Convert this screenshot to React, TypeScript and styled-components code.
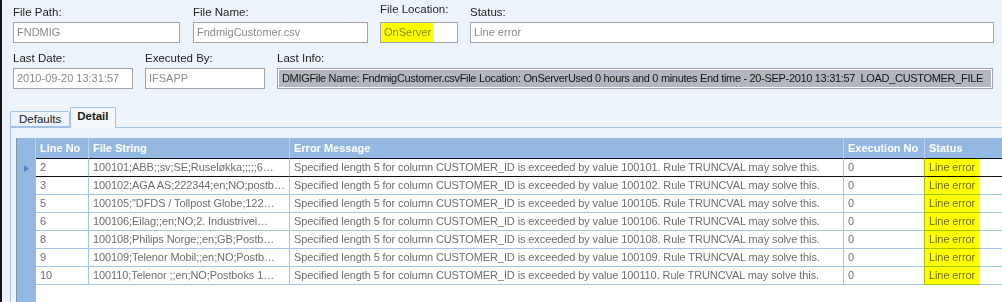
import React from "react";
import styled, { createGlobalStyle, css } from "styled-components";

const GlobalStyle = createGlobalStyle`
   html, body {
      margin: 0;
      padding: 0;
      overflow: hidden;
      background: #edf3fa;
   }
`;

const FONT = `"Liberation Sans", Arial, sans-serif`;

const COLS = [53, 201, 554, 81, 200];

const Root = styled.div`
   height: 302px;
   display: flex;
   flex-direction: column;
   background: #edf3fa;
   border-left: 2px solid #141414;
   font-family: ${FONT};
   font-size: 11.5px;
   overflow: hidden;
`;

const Form = styled.div`
   display: flex;
   flex-direction: column;
   gap: 6px;
   padding: 3px 0 0 11px;
`;

const FormRow = styled.div`
   display: flex;
   gap: 12px;
`;

const Field = styled.div<{ width: number }>`
   display: flex;
   flex-direction: column;
   width: ${(p) => p.width}px;
   flex: none;
`;

const Label = styled.div<{ raised?: boolean }>`
   height: 18px;
   line-height: 18px;
   margin-bottom: 1px;
   color: #1e1e1e;
   white-space: nowrap;
   ${(p) =>
      p.raised &&
      css`
         line-height: 12px;
      `}
`;

const Input = styled.div<{ info?: boolean }>`
   position: relative;
   box-sizing: border-box;
   height: 21px;
   line-height: 19px;
   padding-left: 3px;
   border: 1px solid #a3a3a3;
   background: #ffffff;
   color: #8a8a8a;
   font-size: 11px;
   white-space: nowrap;
   overflow: hidden;

   ${(p) =>
      p.info &&
      css`
         background: #b3b6be;
         box-shadow: inset 0 0 0 1px #ffffff;
         color: #141414;
         padding-left: 4px;
         letter-spacing: -0.32px;
      `}
`;

const Marker = styled.span<{ width: number }>`
   position: absolute;
   left: -1px;
   top: -1px;
   height: 20px;
   width: ${(p) => p.width}px;
   background: #ffff00;
   mix-blend-mode: multiply;
   pointer-events: none;
`;

const TabStrip = styled.div`
   display: flex;
   align-items: flex-end;
   height: 20px;
   margin-top: 18px;
   padding-left: 8px;
`;

const Tab = styled.div<{ active?: boolean }>`
   box-sizing: border-box;
   height: ${(p) => (p.active ? 21 : 16)}px;
   margin-bottom: ${(p) => (p.active ? -1 : 0)}px;
   padding: 0 ${(p) => (p.active ? 6 : 8)}px;
   border: 1px solid #a3c2e6;
   border-bottom: ${(p) => (p.active ? "none" : "1px solid #a3c2e6")};
   border-radius: 2px 2px 0 0;
   background: ${(p) => (p.active ? "#f3f7fc" : "#eef4fb")};
   color: #1a1a1a;
   font-weight: ${(p) => (p.active ? 700 : 400)};
   line-height: ${(p) => (p.active ? 17 : 15)}px;
   position: relative;
   z-index: ${(p) => (p.active ? 1 : 0)};
`;

const Panel = styled.div`
   flex: 1;
   display: flex;
   margin-left: 8px;
   padding: 10px 0 0 5px;
   border-top: 1px solid #a3c2e6;
   border-left: 1px solid #a3c2e6;
   min-height: 0;
`;

const Grid = styled.div`
   flex: 1;
   display: flex;
   border-left: 1px solid #8494a8;
   background: #ffffff;
   overflow: hidden;
`;

const RowHeaders = styled.div`
   flex: none;
   width: 19px;
   background: #93b8e1;
   display: flex;
   flex-direction: column;
`;

const RowHeaderCell = styled.div<{ top?: boolean }>`
   height: ${(p) => (p.top ? 21 : 18)}px;
   flex: none;
   display: flex;
   align-items: center;
   justify-content: center;
   box-sizing: border-box;
   ${(p) =>
      p.top &&
      css`
         box-shadow: inset -1px 0 0 #b9d1ec;
      `}
`;

const DataArea = styled.div`
   position: relative;
   flex: 1;
   display: flex;
   flex-direction: column;
`;

const Row = styled.div`
   display: grid;
   grid-template-columns: ${COLS.map((c) => `${c}px`).join(" ")};
`;

const HeaderCell = styled.div`
   box-sizing: border-box;
   height: 21px;
   line-height: 20px;
   padding-left: 4px;
   background: #93b8e1;
   color: #ffffff;
   font-weight: 700;
   font-size: 11px;
   border-right: 1px solid #b9d1ec;
   border-bottom: 1px solid #101010;
   white-space: nowrap;
   overflow: hidden;
`;

const Cell = styled.div<{ dark?: boolean }>`
   box-sizing: border-box;
   height: 18px;
   line-height: 17px;
   padding-left: 4px;
   color: #6e6e6e;
   font-size: 11px;
   letter-spacing: -0.1px;
   border-right: 1px solid #a3c6ea;
   border-bottom: 1px solid ${(p) => (p.dark ? "#101010" : "#a3c6ea")};
   white-space: nowrap;
   overflow: hidden;
`;

const StatusMarker = styled.div`
   position: absolute;
   left: ${COLS.slice(0, 4).reduce((a, b) => a + b, 0) - 1}px;
   top: 20px;
   width: 56px;
   height: 127px;
   background: #ffff00;
   mix-blend-mode: multiply;
   pointer-events: none;
`;

const rows = [
   { line: "2", str: "100101;ABB;;sv;SE;Ruseløkka;;;;;6…", value: "100101" },
   { line: "3", str: "100102;AGA AS;222344;en;NO;postb…", value: "100102" },
   { line: "5", str: "100105;\"DFDS / Tollpost Globe;122…", value: "100105" },
   { line: "6", str: "100106;Eilag;;en;NO;2. Industrivei…", value: "100106" },
   { line: "8", str: "100108;Philips Norge;;en;GB;Postb…", value: "100108" },
   { line: "9", str: "100109;Telenor Mobil;;en;NO;Postb…", value: "100109" },
   { line: "10", str: "100110;Telenor ;;en;NO;Postboks 1…", value: "100110" },
];

const headers = ["Line No", "File String", "Error Message", "Execution No", "Status"];

const App: React.FC = () => {
   return (
      <Root>
         <GlobalStyle />
         <Form>
            <FormRow>
               <Field width={167}>
                  <Label>File Path:</Label>
                  <Input>FNDMIG</Input>
               </Field>
               <Field width={175} style={{ marginLeft: 1 }}>
                  <Label>File Name:</Label>
                  <Input>FndmigCustomer.csv</Input>
               </Field>
               <Field width={78}>
                  <Label raised>File Location:</Label>
                  <Input>
                     OnServer
                     <Marker width={53} />
                  </Input>
               </Field>
               <Field width={524}>
                  <Label>Status:</Label>
                  <Input>Line error</Input>
               </Field>
            </FormRow>
            <FormRow>
               <Field width={120}>
                  <Label>Last Date:</Label>
                  <Input>2010-09-20 13:31:57</Input>
               </Field>
               <Field width={120}>
                  <Label>Executed By:</Label>
                  <Input>IFSAPP</Input>
               </Field>
               <Field width={716}>
                  <Label>Last Info:</Label>
                  <Input info>
                     DMIGFile Name: FndmigCustomer.csvFile Location: OnServerUsed 0 hours and 0 minutes End
                     time - 20-SEP-2010 13:31:57&nbsp;&nbsp;LOAD_CUSTOMER_FILE
                  </Input>
               </Field>
            </FormRow>
         </Form>

         <TabStrip>
            <Tab>Defaults</Tab>
            <Tab active>Detail</Tab>
         </TabStrip>

         <Panel>
            <Grid>
               <RowHeaders>
                  <RowHeaderCell top />
                  {rows.map((r, i) => (
                     <RowHeaderCell key={r.line}>
                        {i === 0 && (
                           <svg width="6" height="7" viewBox="0 0 6 7">
                              <polygon points="0,0 5,3.5 0,7" fill="#4f87c8" />
                           </svg>
                        )}
                     </RowHeaderCell>
                  ))}
               </RowHeaders>
               <DataArea>
                  <Row>
                     {headers.map((h) => (
                        <HeaderCell key={h}>{h}</HeaderCell>
                     ))}
                  </Row>
                  {rows.map((r, i) => (
                     <Row key={r.line}>
                        <Cell dark={i === 0}>{r.line}</Cell>
                        <Cell dark={i === 0}>{r.str}</Cell>
                        <Cell dark={i === 0}>
                           Specified length 5 for column CUSTOMER_ID is exceeded by value {r.value}. Rule
                           TRUNCVAL may solve this.
                        </Cell>
                        <Cell dark={i === 0}>0</Cell>
                        <Cell dark={i === 0}>Line error</Cell>
                     </Row>
                  ))}
                  <StatusMarker />
               </DataArea>
            </Grid>
         </Panel>
      </Root>
   );
};

export default App;
